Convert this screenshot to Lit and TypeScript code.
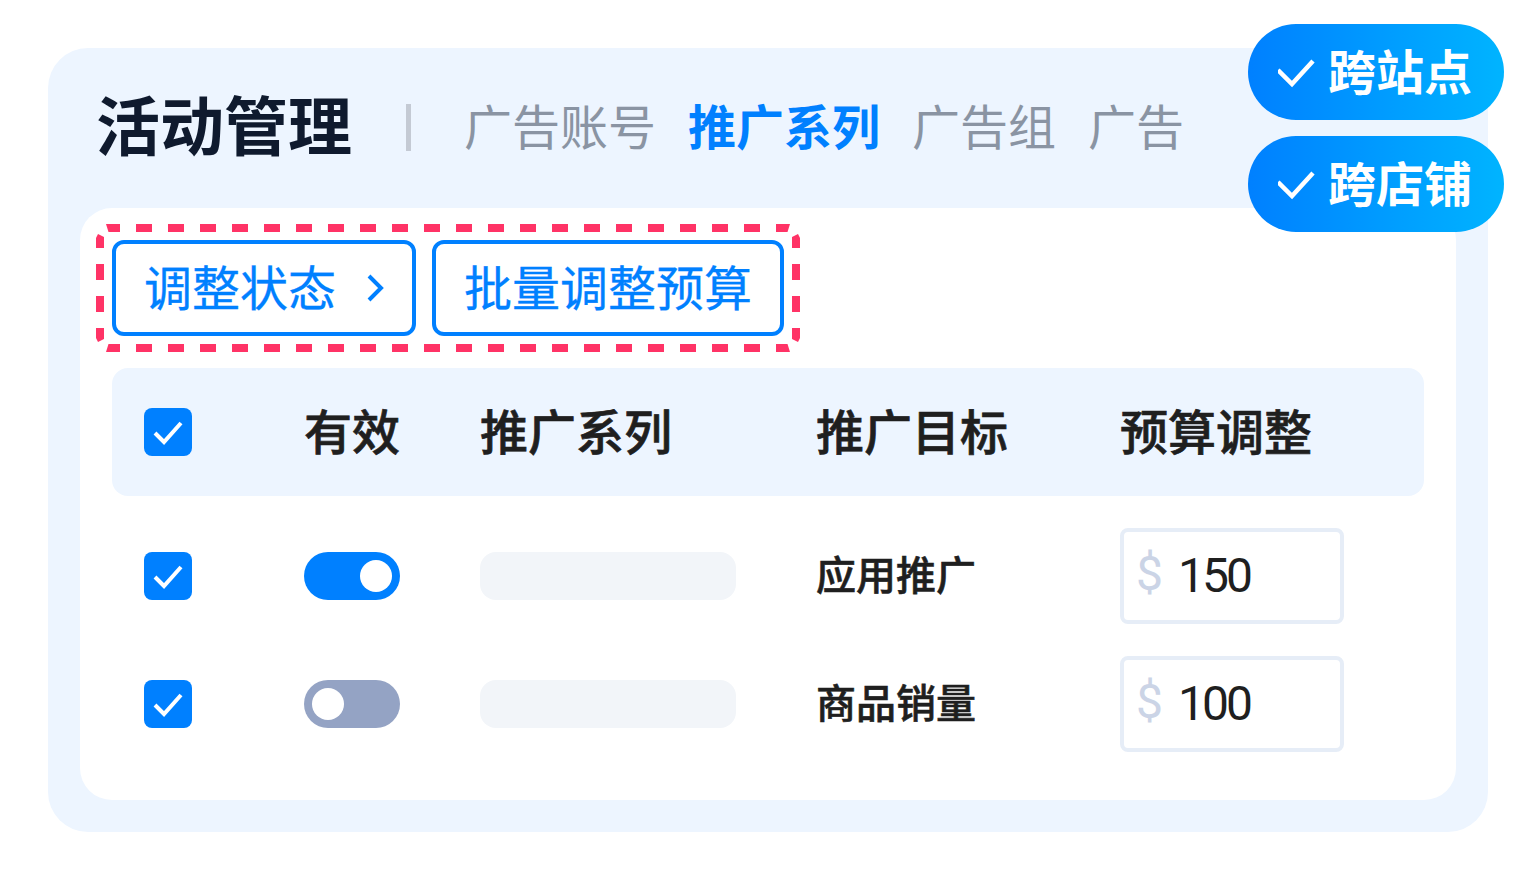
import { LitElement, html, css, svg } from "lit";
import { customElement } from "lit/decorators.js";

const tick = html`<svg class="tick" viewBox="0 0 48 48"><path d="M11 25 L20 34 L37 15" /></svg>`;
const checkbox = html`<span class="checkbox">${tick}</span>`;
const corner = (t: string) =>
  svg`<g transform=${t}><polygon points="10,0 24,0 24,8 12.5,8" /><polygon points="0,14 2,10 8,13 8,24 0,24" /></g>`;

@customElement("app-root")
export class AppRoot extends LitElement {
  static styles = css`
    :host {
      display: block;
      width: 1536px;
      height: 880px;
      background: #fff;
      font-family: "Noto Sans CJK SC", "Noto Sans", sans-serif;
      overflow: hidden;
    }
    .page { position: relative; padding: 48px; box-sizing: border-box; height: 880px; }
    .panel {
      width: 1440px; height: 784px; box-sizing: border-box;
      background: #edf5ff; border-radius: 40px;
      padding: 0 32px 32px; display: flex; flex-direction: column;
    }
    .head { height: 160px; display: flex; align-items: center; padding-left: 16px; }
    .title { font-size: 64px; font-weight: 700; color: #0f1a2e; width: 256px; line-height: 1; margin-top: -12px; }
    .divider { width: 5px; height: 47px; background: #c4cad4; margin: -2px 53px 0 54px; }
    .tabs { display: flex; gap: 32px; font-size: 48px; color: #8a94a3; line-height: 1; margin-top: -8px; }
    .tabs .on { color: #0080ff; font-weight: 700; }
    .body {
      flex: 1; background: #fff; border-radius: 32px;
      padding: 16px 32px 0; box-sizing: border-box;
    }
    .actions {
      position: relative; display: inline-flex; gap: 16px; padding: 16px; margin-left: -16px; vertical-align: top;
    }
    .outline { position: absolute; left: 0; top: 0; width: 704px; height: 128px; pointer-events: none; fill: #ff3366; }
    .outline line { stroke: #ff3366; stroke-width: 8; stroke-dasharray: 16 16; }
    .btn {
      height: 96px; box-sizing: border-box; border: 4px solid #0080ff; border-radius: 12px;
      color: #0080ff; font-size: 48px; display: flex; align-items: center; padding: 0 28px 6px; line-height: 1;
      -webkit-text-stroke: 0.3px #0080ff;
    }
    .btn.a { width: 304px; justify-content: space-between; }
    .btn.b { width: 352px; }
    .chev { width: 24px; height: 32px; margin: 6px -4px 0 0; fill: none; stroke: #0080ff; stroke-width: 4; flex: none; }
    .row {
      display: grid; grid-template-columns: 192px 176px 336px 304px 1fr;
      align-items: center; height: 128px;
    }
    .row > :first-child { margin-left: 32px; }
    .thead {
      margin-top: 16px; background: #edf5ff; border-radius: 16px; font-size: 48px; font-weight: 500;
      color: #1f1f1f; margin-bottom: 16px; line-height: 1; -webkit-text-stroke: 0.7px #1f1f1f;
    }
    .thead span:not(.checkbox) { margin-top: -6px; }
    .tcell { font-size: 40px; font-weight: 500; color: #1f1f1f; line-height: 1; margin-top: -6px; -webkit-text-stroke: 0.6px #1f1f1f; }
    .checkbox { display: block; width: 48px; height: 48px; border-radius: 8px; background: #0080ff; }
    .tick { display: block; width: 48px; height: 48px; fill: none; stroke: #fff; stroke-width: 4; }
    .switch { display: flex; width: 96px; height: 48px; border-radius: 24px; padding: 8px; box-sizing: border-box; background: #94a3c4; }
    .switch.on { background: #0080ff; justify-content: flex-end; }
    .knob { width: 32px; height: 32px; border-radius: 50%; background: #fff; }
    .skeleton { width: 256px; height: 48px; border-radius: 16px; background: #f2f5f9; }
    .input {
      width: 224px; height: 96px; box-sizing: border-box; border: 4px solid #e6edf7; border-radius: 8px;
      display: flex; align-items: center; padding-left: 12px;
      font-family: Roboto, sans-serif; color: #1f1f1f;
    }
    .dollar { font-size: 48px; font-weight: 400; color: #cbd4e6; width: 42px; line-height: 1; margin-top: -4px; }
    .num { font-size: 48px; line-height: 1; letter-spacing: -3px; font-weight: 400; }
    .badges { position: absolute; left: 1248px; top: 24px; display: flex; flex-direction: column; gap: 16px; }
    .badge {
      width: 256px; height: 96px; border-radius: 48px; box-sizing: border-box;
      background: linear-gradient(90deg, #0080ff, #00b4ff);
      color: #fff; font-size: 48px; font-weight: 700; line-height: 1;
      display: flex; align-items: center; padding-left: 30px; gap: 12px;
    }
    .badge svg { width: 38px; height: 32px; margin-top: 6px; fill: none; stroke: #fff; stroke-width: 4.5; flex: none; }
    .badge span { margin-top: -6px; }
  `;

  private cell(on: boolean, label: string, amount: string) {
    return html`<div class="row">
      ${checkbox}
      <span class="switch ${on ? "on" : ""}"><span class="knob"></span></span>
      <span class="skeleton"></span>
      <span class="tcell">${label}</span>
      <span class="input"><span class="dollar">$</span><span class="num">${amount}</span></span>
    </div>`;
  }

  render() {
    const badgeTick = html`<svg viewBox="0 0 38 32"><path d="M0 11 L14 25 L35 2" /></svg>`;
    return html`<div class="page">
      <div class="panel">
        <div class="head">
          <div class="title">活动管理</div>
          <div class="divider"></div>
          <div class="tabs">
            <span>广告账号</span><span class="on">推广系列</span><span>广告组</span><span>广告</span>
          </div>
        </div>
        <div class="body">
          <div class="actions">
            <svg class="outline" viewBox="0 0 704 128">
              ${svg`<line x1="40" y1="4" x2="664" y2="4" />
              <line x1="40" y1="124" x2="664" y2="124" />
              <line x1="4" y1="40" x2="4" y2="88" />
              <line x1="700" y1="40" x2="700" y2="88" />`}
              ${corner("")}
              ${corner("translate(704 0) scale(-1 1)")}
              ${corner("translate(0 128) scale(1 -1)")}
              ${corner("translate(704 128) scale(-1 -1)")}
            </svg>
            <div class="btn a">调整状态<svg class="chev" viewBox="0 0 24 32"><path d="M5 4 L17 16 L5 28" /></svg></div>
            <div class="btn b">批量调整预算</div>
          </div>
          <div class="row thead">
            ${checkbox}
            <span>有效</span><span>推广系列</span><span>推广目标</span><span>预算调整</span>
          </div>
          ${this.cell(true, "应用推广", "150")}
          ${this.cell(false, "商品销量", "100")}
        </div>
      </div>
      <div class="badges">
        <div class="badge">${badgeTick}<span>跨站点</span></div>
        <div class="badge">${badgeTick}<span>跨店铺</span></div>
      </div>
    </div>`;
  }
}
